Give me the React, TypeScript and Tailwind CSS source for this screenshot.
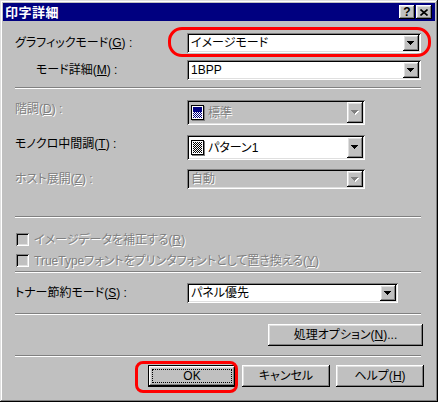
import React from "react";

// Win95 style bevels
const raised =
  "shadow-[inset_-1px_-1px_#000,inset_1px_1px_#fff,inset_-2px_-2px_#808080,inset_2px_2px_#dfdfdf]";
const sunken =
  "shadow-[inset_1px_1px_#808080,inset_-1px_-1px_#fff,inset_2px_2px_#000,inset_-2px_-2px_#dfdfdf]";
const dim = "text-[#808080] [text-shadow:1px_1px_0_#fff]";

const Arrow = ({ disabled }: { disabled?: boolean }) => (
  <svg width="8" height="5" viewBox="0 0 8 5" shapeRendering="crispEdges">
    {disabled && (
      <g fill="#fff">
        <rect x="1" y="1" width="7" height="1" />
        <rect x="2" y="2" width="5" height="1" />
        <rect x="3" y="3" width="3" height="1" />
        <rect x="4" y="4" width="1" height="1" />
      </g>
    )}
    <g fill={disabled ? "#808080" : "#000"}>
      <rect x="0" y="0" width="7" height="1" />
      <rect x="1" y="1" width="5" height="1" />
      <rect x="2" y="2" width="3" height="1" />
      <rect x="3" y="3" width="1" height="1" />
    </g>
  </svg>
);

const PageIcon = ({ kind }: { kind: "std" | "pattern" }) => (
  <svg width="14" height="16" viewBox="0 0 14 16" shapeRendering="crispEdges">
    <defs>
      <pattern id={`d-${kind}`} width="2" height="2" patternUnits="userSpaceOnUse">
        <rect width="2" height="2" fill="#fff" />
        <rect width="1" height="1" fill={kind === "std" ? "#000080" : "#000"} />
        <rect x="1" y="1" width="1" height="1" fill={kind === "std" ? "#000080" : "#000"} />
      </pattern>
    </defs>
    <rect x="1" y="1" width="13" height="15" fill="#808080" />
    <rect x="0.5" y="0.5" width="12" height="14" fill="#fff" stroke="#000" />
    {kind === "std" ? (
      <>
        <rect x="2" y="2" width="9" height="5" fill="#000080" />
        <rect x="2" y="7" width="9" height="6" fill="url(#d-std)" />
      </>
    ) : (
      <rect x="2" y="2" width="9" height="11" fill="url(#d-pattern)" />
    )}
  </svg>
);

const Combo = ({
  className,
  value,
  disabled,
  icon,
}: {
  className: string;
  value: string;
  disabled?: boolean;
  icon?: "std" | "pattern";
}) => (
  <div
    className={`flex items-stretch p-[2px] ${sunken} ${
      disabled ? "bg-[#c0c0c0]" : "bg-white"
    } ${className}`}
  >
    <div className="flex-1 flex items-center pl-[2px] gap-[3px]">
      {icon && <PageIcon kind={icon} />}
      <span className={disabled ? dim : ""}>{value}</span>
    </div>
    <div className={`w-[16px] bg-[#c0c0c0] flex items-center justify-center ${raised}`}>
      <Arrow disabled={disabled} />
    </div>
  </div>
);

const Sep = ({ className }: { className: string }) => (
  <div className={`h-[2px] border-t border-t-[#808080] border-b border-b-white ${className}`} />
);

const Check = ({ children }: { children: React.ReactNode }) => (
  <div className="h-[13px] flex items-center">
    <div className={`ml-[1px] w-[13px] h-[13px] bg-[#c0c0c0] ${sunken}`} />
    <span className={`ml-[5px] leading-none ${dim}`}>{children}</span>
  </div>
);

const Button = ({
  className,
  children,
  isDefault,
}: {
  className: string;
  children: React.ReactNode;
  isDefault?: boolean;
}) =>
  isDefault ? (
    <div className={`border border-black ${className}`}>
      <div className={`w-full h-full bg-[#c0c0c0] p-[3px] ${raised}`}>
        <div className="w-full h-full border border-dotted border-black flex items-center justify-center">
          {children}
        </div>
      </div>
    </div>
  ) : (
    <div className={`bg-[#c0c0c0] flex items-center justify-center ${raised} ${className}`}>
      {children}
    </div>
  );

export default function App() {
  return (
    <div className="relative w-[438px] h-[402px] bg-[#c0c0c0] p-[3px] text-[12px] leading-[16px] text-black font-['Liberation_Sans','Noto_Sans_CJK_JP',sans-serif] [font-feature-settings:'palt'] shadow-[inset_-1px_-1px_#000,inset_1px_1px_#dfdfdf,inset_-2px_-2px_#808080,inset_2px_2px_#fff]">
      {/* title bar */}
      <div className="h-[18px] bg-[#000080] flex items-center pl-[2px] pr-[3px]">
        <span className="text-white font-bold text-[13px] leading-none tracking-[0.5px]">印字詳細</span>
        <div className="ml-auto flex gap-[1px]">
          <div className={`w-[16px] h-[14px] bg-[#c0c0c0] flex items-center justify-center font-bold text-[12px] leading-none ${raised}`}>
            ?
          </div>
          <div className={`w-[16px] h-[14px] bg-[#c0c0c0] flex items-center justify-center ${raised}`}>
            <svg width="8" height="7" viewBox="0 0 8 7">
              <path d="M0.5 0.5L7.5 6.5M7.5 0.5L0.5 6.5" stroke="#000" strokeWidth="1.6" />
            </svg>
          </div>
        </div>
      </div>

      <div className="flex flex-col pl-[12px] pr-[14px]">
        <div className="mt-[12px] h-[20px] flex items-center">
          <span className="w-[172px]">
            グラフィックモード(<span className="underline">G</span>) :
          </span>
          <Combo className="w-[234px] h-[20px]" value="イメージモード" />
        </div>
        <div className="mt-[7px] h-[20px] flex items-center">
          <span className="w-[172px] pl-[21px]">
            モード詳細(<span className="underline">M</span>) :
          </span>
          <Combo className="w-[234px] h-[20px]" value="1BPP" />
        </div>

        <Sep className="mt-[7px]" />

        <div className="mt-[11px] h-[25px] flex items-start">
          <span className={`w-[172px] mt-[1px] ${dim}`}>
            階調(<span className="underline">D</span>) :
          </span>
          <Combo className="w-[178px] h-[25px]" value="標準" disabled icon="std" />
        </div>
        <div className="mt-[10px] h-[25px] flex items-start">
          <span className="w-[172px] mt-[1px]">
            モノクロ中間調(<span className="underline">T</span>) :
          </span>
          <Combo className="w-[178px] h-[25px]" value="パターン1" icon="pattern" />
        </div>
        <div className="mt-[9px] h-[20px] flex items-center">
          <span className={`w-[172px] ${dim}`}>
            ホスト展開(<span className="underline">Z</span>) :
          </span>
          <Combo className="w-[178px] h-[20px]" value="自動" disabled />
        </div>

        <Sep className="mt-[27px]" />

        <div className="mt-[15px]">
          <Check>
            イメージデータを補正する(<span className="underline">R</span>)
          </Check>
        </div>
        <div className="mt-[8px]">
          <Check>
            TrueTypeフォントをプリンタフォントとして置き換える(<span className="underline">Y</span>)
          </Check>
        </div>

        <Sep className="mt-[4px]" />

        <div className="mt-[10px] h-[20px] flex items-center">
          <span className="w-[172px]">
            トナー節約モード(<span className="underline">S</span>) :
          </span>
          <Combo className="w-[211px] h-[20px]" value="パネル優先" />
        </div>

        <Sep className="mt-[10px]" />

        <div className="mt-[9px] flex justify-end -mr-[2px]">
          <Button className="w-[155px] h-[22px]">
            処理オプション(<span className="underline">N</span>)...
          </Button>
        </div>

        <Sep className="mt-[9px]" />

        <div className="mt-[8px] flex justify-end gap-[6px] -mr-[3px]">
          <Button className="w-[88px] h-[22px]" isDefault>
            OK
          </Button>
          <Button className="w-[88px] h-[22px]">キャンセル</Button>
          <Button className="w-[88px] h-[22px]">
            ヘルプ(<span className="underline">H</span>)
          </Button>
        </div>
      </div>

      {/* red annotation marks */}
      <div className="absolute left-[168px] top-[27px] w-[263px] h-[30px] border-[3px] border-[#ff0000] rounded-[14px]" />
      <div className="absolute left-[135px] top-[361px] w-[103px] h-[32px] border-[3px] border-[#ff0000] rounded-[8px]" />
    </div>
  );
}
